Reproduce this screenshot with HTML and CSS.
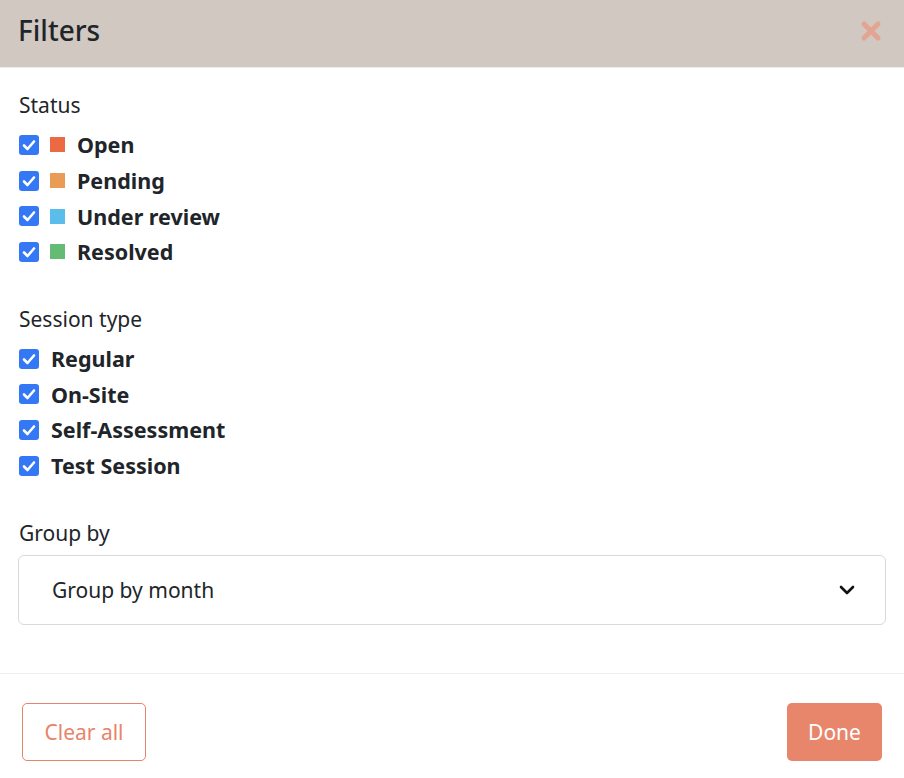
FILE: index.html
```html
<!DOCTYPE html>
<html lang="en">
<head>
<meta charset="utf-8">
<title>Filters</title>
<link rel="stylesheet" href="styles.css">
</head>
<body>
<div class="modal">
  <header class="header">
    <h1 class="title">Filters</h1>
    <button class="close" aria-label="Close">
      <svg width="22" height="22" viewBox="0 0 22 22"><path d="M4 4 L18 18 M18 4 L4 18" stroke="#e3a492" stroke-width="5" stroke-linecap="round" fill="none"/></svg>
    </button>
  </header>
  <main class="content">
    <section class="group">
      <h2 class="group-title">Status</h2>
      <ul class="options">
        <li class="option"><span class="check"><svg viewBox="0 0 20 20"><path d="M5 10.5 L8.5 14 L15 6.5" stroke="#fff" stroke-width="2.6" fill="none" stroke-linecap="round" stroke-linejoin="round"/></svg></span><span class="swatch swatch-open"></span><span class="label">Open</span></li>
        <li class="option"><span class="check"><svg viewBox="0 0 20 20"><path d="M5 10.5 L8.5 14 L15 6.5" stroke="#fff" stroke-width="2.6" fill="none" stroke-linecap="round" stroke-linejoin="round"/></svg></span><span class="swatch swatch-pending"></span><span class="label">Pending</span></li>
        <li class="option"><span class="check"><svg viewBox="0 0 20 20"><path d="M5 10.5 L8.5 14 L15 6.5" stroke="#fff" stroke-width="2.6" fill="none" stroke-linecap="round" stroke-linejoin="round"/></svg></span><span class="swatch swatch-review"></span><span class="label">Under review</span></li>
        <li class="option"><span class="check"><svg viewBox="0 0 20 20"><path d="M5 10.5 L8.5 14 L15 6.5" stroke="#fff" stroke-width="2.6" fill="none" stroke-linecap="round" stroke-linejoin="round"/></svg></span><span class="swatch swatch-resolved"></span><span class="label">Resolved</span></li>
      </ul>
    </section>
    <section class="group">
      <h2 class="group-title">Session type</h2>
      <ul class="options">
        <li class="option"><span class="check"><svg viewBox="0 0 20 20"><path d="M5 10.5 L8.5 14 L15 6.5" stroke="#fff" stroke-width="2.6" fill="none" stroke-linecap="round" stroke-linejoin="round"/></svg></span><span class="label label-plain">Regular</span></li>
        <li class="option"><span class="check"><svg viewBox="0 0 20 20"><path d="M5 10.5 L8.5 14 L15 6.5" stroke="#fff" stroke-width="2.6" fill="none" stroke-linecap="round" stroke-linejoin="round"/></svg></span><span class="label label-plain">On-Site</span></li>
        <li class="option"><span class="check"><svg viewBox="0 0 20 20"><path d="M5 10.5 L8.5 14 L15 6.5" stroke="#fff" stroke-width="2.6" fill="none" stroke-linecap="round" stroke-linejoin="round"/></svg></span><span class="label label-plain">Self-Assessment</span></li>
        <li class="option"><span class="check"><svg viewBox="0 0 20 20"><path d="M5 10.5 L8.5 14 L15 6.5" stroke="#fff" stroke-width="2.6" fill="none" stroke-linecap="round" stroke-linejoin="round"/></svg></span><span class="label label-plain">Test Session</span></li>
      </ul>
    </section>
    <section class="group">
      <h2 class="group-title">Group by</h2>
      <div class="select">
        <span class="select-value">Group by month</span>
        <svg class="chevron" width="18" height="12" viewBox="0 0 18 12"><path d="M3 3 L9 9 L15 3" stroke="#111" stroke-width="2.6" fill="none" stroke-linecap="round" stroke-linejoin="round"/></svg>
      </div>
    </section>
  </main>
  <footer class="footer">
    <button class="btn btn-outline">Clear all</button>
    <button class="btn btn-primary">Done</button>
  </footer>
</div>
</body>
</html>
```

FILE: styles.css
```css
* { box-sizing: border-box; }
html, body { margin: 0; padding: 0; background: #fff; }
body {
  font-family: "Noto Sans", "Open Sans", sans-serif;
  color: #212529;
  width: 904px;
  height: 778px;
  overflow: hidden;
}
.modal { display: flex; flex-direction: column; height: 778px; }
.header {
  height: 68px;
  background: #d1c8c2;
  border-bottom: 1px solid #ececec;
  display: flex;
  align-items: center;
  justify-content: space-between;
  padding: 0 22px 8px 18px;
}
.title {
  margin: 0;
  font-size: 28px;
  font-weight: 500;
  color: #212529;
  line-height: 34px;
}
.close {
  background: none;
  border: 0;
  padding: 0;
  width: 22px;
  height: 22px;
  cursor: pointer;
  display: flex;
  margin-top: 2px;
}
.content {
  flex: 1;
  padding: 25px 18px 0 18px;
}
.group { margin-bottom: 37px; }
.group:last-child { margin-bottom: 0; }
.group-title {
  margin: 0 0 10px 1px;
  font-size: 21px;
  font-weight: 400;
  line-height: 24px;
  color: #212529;
}
.options { list-style: none; margin: 0; padding: 0; }
.option {
  display: flex;
  align-items: center;
  height: 35.7px;
}
.check {
  width: 20px;
  height: 20px;
  border-radius: 3px;
  background: #3478f6;
  display: inline-flex;
  margin-left: 1px;
}
.check svg { width: 20px; height: 20px; }
.swatch {
  width: 15px;
  height: 15px;
  margin-left: 11px;
}
.swatch-open { background: #ec6a43; }
.swatch-pending { background: #e99c56; }
.swatch-review { background: #5bbdea; }
.swatch-resolved { background: #63bb74; }
.label {
  margin-left: 12px;
  font-size: 21.5px;
  font-weight: 700;
  color: #212529;
}
.label-plain { margin-left: 12px; }
.select {
  height: 70px;
  border: 1px solid #d8d8de;
  border-radius: 6px;
  display: flex;
  align-items: center;
  justify-content: space-between;
  padding: 0 29px 0 33px;
}
.select-value { font-size: 21px; color: #212529; }
.chevron { display: block; }
.footer {
  border-top: 1px solid #eeeeee;
  padding: 29px 22px 17px 22px;
  display: flex;
  justify-content: space-between;
}
.btn {
  height: 58px;
  border-radius: 5px;
  font-family: inherit;
  font-size: 21px;
  cursor: pointer;
  padding: 0;
}
.btn-outline {
  background: #fff;
  border: 1px solid #e8846a;
  color: #e8846a;
  width: 124px;
}
.btn-primary {
  background: #e8866c;
  border: 0;
  color: #fff;
  width: 95px;
}
```
